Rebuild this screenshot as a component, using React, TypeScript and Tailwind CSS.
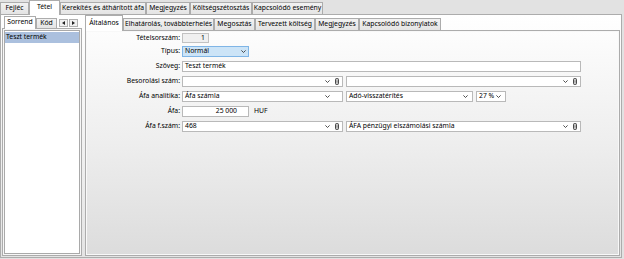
import React from "react";

function Chevron() {
  return (
    <svg width="5" height="3" viewBox="0 0 5 3" className="shrink-0">
      <path d="M0.4 0.4 L2.5 2.5 L4.6 0.4" fill="none" stroke="#3c3c3c" strokeWidth="0.9" />
    </svg>
  );
}

function Clip({ hidden }: { hidden?: boolean }) {
  return (
    <svg width="4" height="7" viewBox="0 0 4 7" className={hidden ? "shrink-0 opacity-0" : "shrink-0"}>
      <rect x="0.55" y="0.55" width="2.9" height="5.9" rx="1.45" fill="none" stroke="#4a4a4a" strokeWidth="1.1" />
      <line x1="2" y1="2.2" x2="2" y2="4.8" stroke="#4a4a4a" strokeWidth="0.8" />
    </svg>
  );
}

function TopTab({ label, cls, active }: { label: string; cls: string; active?: boolean }) {
  return active ? (
    <div className={`${cls} h-[15px] -mb-px relative z-10 bg-white border border-b-0 border-[#acacac] flex items-center justify-center pb-[1px] whitespace-nowrap`}>
      {label}
    </div>
  ) : (
    <div className={`${cls} h-[12px] bg-gradient-to-b from-[#f2f2f2] to-[#e4e4e4] border border-b-0 border-[#acacac] flex items-center justify-center whitespace-nowrap`}>
      {label}
    </div>
  );
}

function InnerTab({ label, cls, active }: { label: string; cls: string; active?: boolean }) {
  return active ? (
    <div className={`${cls} h-[16px] -mb-px relative z-10 bg-white border border-b-0 border-[#acacac] flex items-center justify-center pb-[1px] whitespace-nowrap`}>
      {label}
    </div>
  ) : (
    <div className={`${cls} h-[12px] bg-gradient-to-b from-[#f2f2f2] to-[#e4e4e4] border border-b-0 border-[#acacac] flex items-center justify-center whitespace-nowrap`}>
      {label}
    </div>
  );
}

function Combo({
  cls,
  text,
  clip,
  hiddenClip,
  pr,
}: {
  cls: string;
  text: string;
  clip?: boolean;
  hiddenClip?: boolean;
  pr: string;
}) {
  return (
    <div className={`${cls} h-[11px] border border-[#b9b9b9] bg-white flex items-center pl-[2px] ${pr}`}>
      <div className="flex-1 whitespace-nowrap">{text}</div>
      <Chevron />
      {(clip || hiddenClip) && (
        <div className="ml-[5px] flex items-center">
          <Clip hidden={hiddenClip} />
        </div>
      )}
    </div>
  );
}

function Row({ label, mt, children }: { label: string; mt: string; children: React.ReactNode }) {
  return (
    <div className={`flex items-center ${mt}`}>
      <div className="w-[94px] text-right shrink-0 whitespace-nowrap">{label}</div>
      <div className="ml-[2px] flex items-center gap-[3px]">{children}</div>
    </div>
  );
}

export default function App() {
  return (
    <div className="w-[624px] h-[259px] bg-[#e2e2e2] font-['Noto_Sans',sans-serif] text-[6.8px] leading-none text-black flex flex-col pr-[2px] pb-[1px] overflow-hidden">
      {/* top tabs */}
      <div className="h-[14px] flex items-end shrink-0">
        <TopTab label="Fejléc" cls="w-[29px]" />
        <TopTab label="Tétel" cls="w-[31px]" active />
        <TopTab label="Kerekítés és áthárított áfa" cls="w-[86px]" />
        <TopTab label="Megjegyzés" cls="w-[44px]" />
        <TopTab label="Költségszétosztás" cls="w-[62px]" />
        <TopTab label="Kapcsolódó esemény" cls="w-[71px]" />
      </div>

      {/* outer panel */}
      <div className="flex-1 border border-[#acacac] bg-gradient-to-b from-white to-[#e4e4e4] flex pl-[1px] pb-[1px]">
        {/* left pane */}
        <div className="w-[80px] flex flex-col">
          <div className="h-[13px] flex items-end shrink-0 pl-[2px]">
            <InnerTab label="Sorrend" cls="w-[32px] !h-[13px]" active />
            <InnerTab label="Kód" cls="w-[21px] !h-[10px]" />
            <div className="self-start mt-[4px] ml-[2px] flex gap-[1px]">
              <div className="w-[9px] h-[8px] border border-[#b0b0b0] bg-[#f0f0f0] flex items-center justify-center">
                <svg width="3" height="4" viewBox="0 0 3 4">
                  <path d="M3 0 L0 2 L3 4 Z" fill="#222" />
                </svg>
              </div>
              <div className="w-[9px] h-[8px] border border-[#b0b0b0] bg-[#f0f0f0] flex items-center justify-center">
                <svg width="3" height="4" viewBox="0 0 3 4">
                  <path d="M0 0 L3 2 L0 4 Z" fill="#222" />
                </svg>
              </div>
            </div>
          </div>
          <div className="flex-1 border border-[#acacac] bg-[#f7f7f7] p-[1px]">
            <div className="h-full border border-[#a9a9a9] bg-white pt-[1px]">
              <div className="h-[11px] bg-[#abc0de] flex items-center pl-[1px]">Teszt termék</div>
            </div>
          </div>
        </div>

        {/* splitter */}
        <div className="w-[3px] shrink-0" />

        {/* right pane */}
        <div className="flex-1 flex flex-col mr-[1px]">
          <div className="h-[15px] flex items-end shrink-0">
            <InnerTab label="Általános" cls="w-[38px]" active />
            <InnerTab label="Elhatárolás, továbbterhelés" cls="w-[91px]" />
            <InnerTab label="Megosztás" cls="w-[41px]" />
            <InnerTab label="Tervezett költség" cls="w-[60px]" />
            <InnerTab label="Megjegyzés" cls="w-[44px]" />
            <InnerTab label="Kapcsolódó bizonylatok" cls="w-[82px]" />
          </div>
          <div className="flex-1 border border-[#acacac] bg-gradient-to-b from-[#fdfdfd] via-[#eeeeee] to-[#dcdcdc] shadow-[inset_0_0_0_1px_#f8f8f8] pt-[2px]">
            <Row label="Tételsorszám:" mt="mt-0">
              <div className="w-[27px] h-[10px] border border-[#c2c2c2] bg-[#f0f0f0] flex items-center justify-end pr-[3px]">1</div>
            </Row>
            <Row label="Típus:" mt="mt-[3px]">
              <div className="w-[67px] h-[11px] border border-[#7fb5e6] bg-[#cce4f7] flex items-center pl-[2px] pr-[2px]">
                <div className="flex-1">Normál</div>
                <Chevron />
              </div>
            </Row>
            <Row label="Szöveg:" mt="mt-[4px]">
              <div className="w-[399px] h-[11px] border border-[#b9b9b9] bg-white flex items-center pl-[2px]">Teszt termék</div>
            </Row>
            <Row label="Besorolási szám:" mt="mt-[4px]">
              <Combo cls="w-[161px]" text="" clip pr="pr-[3px]" />
              <Combo cls="w-[235px]" text="" clip pr="pr-[3px]" />
            </Row>
            <Row label="Áfa analitika:" mt="mt-[4px]">
              <Combo cls="w-[161px]" text="Áfa számla" hiddenClip pr="pr-[3px]" />
              <Combo cls="w-[127px]" text="Adó-visszatérítés" pr="pr-[4px]" />
              <Combo cls="w-[30px]" text="27 %" pr="pr-[4px]" />
            </Row>
            <Row label="Áfa:" mt="mt-[4px]">
              <div className="w-[67px] h-[11px] border border-[#b9b9b9] bg-white flex items-center justify-end pr-[11px]">25 000</div>
              <div className="ml-[2px]">HUF</div>
            </Row>
            <Row label="Áfa f.szám:" mt="mt-[4px]">
              <Combo cls="w-[161px]" text="468" clip pr="pr-[3px]" />
              <Combo cls="w-[235px]" text="ÁFA pénzügyi elszámolási számla" clip pr="pr-[3px]" />
            </Row>
          </div>
        </div>
      </div>
    </div>
  );
}
